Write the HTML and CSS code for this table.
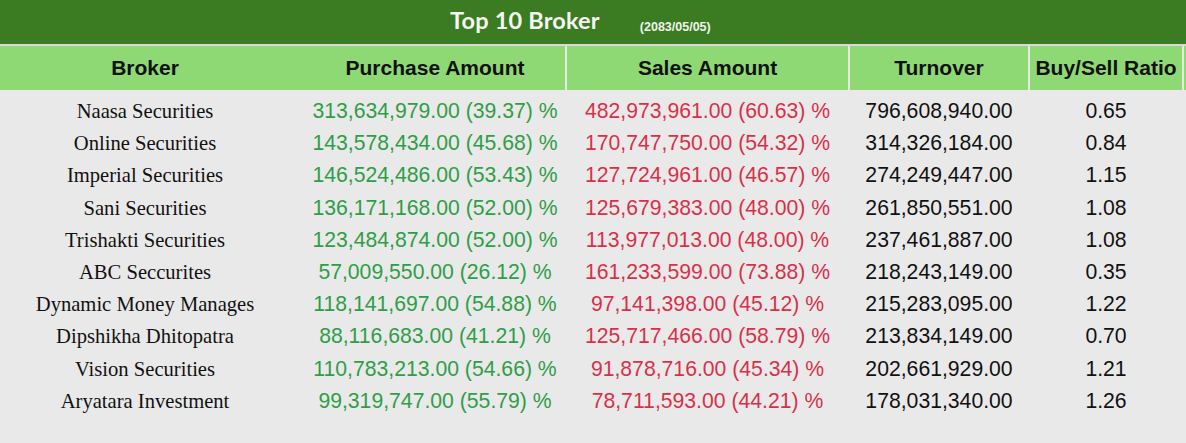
FILE: index.html
```html
<!DOCTYPE html>
<html>
<head>
<meta charset="utf-8">
<link rel="stylesheet" href="styles.css">
</head>
<body>
<div class="board">
  <div class="titlebar">
    <span class="title">Top 10 Broker</span>
    <span class="date">(2083/05/05)</span>
  </div>
  <div class="row head">
    <div class="c broker">Broker</div>
    <div class="c buy">Purchase Amount</div>
    <div class="c sell sep">Sales Amount</div>
    <div class="c turn sep">Turnover</div>
    <div class="c ratio sep last">Buy/Sell Ratio</div>
  </div>
  <div class="body">
    <div class="row"><div class="c broker">Naasa Securities</div><div class="c buy">313,634,979.00 (39.37) %</div><div class="c sell">482,973,961.00 (60.63) %</div><div class="c turn">796,608,940.00</div><div class="c ratio">0.65</div></div>
    <div class="row"><div class="c broker">Online Securities</div><div class="c buy">143,578,434.00 (45.68) %</div><div class="c sell">170,747,750.00 (54.32) %</div><div class="c turn">314,326,184.00</div><div class="c ratio">0.84</div></div>
    <div class="row"><div class="c broker">Imperial Securities</div><div class="c buy">146,524,486.00 (53.43) %</div><div class="c sell">127,724,961.00 (46.57) %</div><div class="c turn">274,249,447.00</div><div class="c ratio">1.15</div></div>
    <div class="row"><div class="c broker">Sani Securities</div><div class="c buy">136,171,168.00 (52.00) %</div><div class="c sell">125,679,383.00 (48.00) %</div><div class="c turn">261,850,551.00</div><div class="c ratio">1.08</div></div>
    <div class="row"><div class="c broker">Trishakti Securities</div><div class="c buy">123,484,874.00 (52.00) %</div><div class="c sell">113,977,013.00 (48.00) %</div><div class="c turn">237,461,887.00</div><div class="c ratio">1.08</div></div>
    <div class="row"><div class="c broker">ABC Seccurites</div><div class="c buy">57,009,550.00 (26.12) %</div><div class="c sell">161,233,599.00 (73.88) %</div><div class="c turn">218,243,149.00</div><div class="c ratio">0.35</div></div>
    <div class="row"><div class="c broker">Dynamic Money Manages</div><div class="c buy">118,141,697.00 (54.88) %</div><div class="c sell">97,141,398.00 (45.12) %</div><div class="c turn">215,283,095.00</div><div class="c ratio">1.22</div></div>
    <div class="row"><div class="c broker">Dipshikha Dhitopatra</div><div class="c buy">88,116,683.00 (41.21) %</div><div class="c sell">125,717,466.00 (58.79) %</div><div class="c turn">213,834,149.00</div><div class="c ratio">0.70</div></div>
    <div class="row"><div class="c broker">Vision Securities</div><div class="c buy">110,783,213.00 (54.66) %</div><div class="c sell">91,878,716.00 (45.34) %</div><div class="c turn">202,661,929.00</div><div class="c ratio">1.21</div></div>
    <div class="row"><div class="c broker">Aryatara Investment</div><div class="c buy">99,319,747.00 (55.79) %</div><div class="c sell">78,711,593.00 (44.21) %</div><div class="c turn">178,031,340.00</div><div class="c ratio">1.26</div></div>
  </div>
</div>
</body>
</html>
```

FILE: styles.css
```css
html, body {
  margin: 0;
  padding: 0;
  background: #e9e9e9;
}
.board {
  width: 1186px;
  height: 443px;
  background: #e9e9e9;
  font-family: "Liberation Sans", Arial, sans-serif;
}
.titlebar {
  background: #3b7b22;
  display: flex;
  align-items: baseline;
  padding-left: 450px;
  box-sizing: border-box;
  border-bottom: 2px solid #d6dbd3;
  height: 46px;
  padding-top: 6px;
}
.title {
  font-family: Lato, "Open Sans", sans-serif;
  font-weight: 700;
  font-size: 23.5px;
  color: #f5f7f2;
  letter-spacing: 0.2px;
}
.date {
  margin-left: 40px;
  font-size: 12.5px;
  font-weight: 700;
  color: #eef3ea;
  position: relative;
  top: 2px;
}
.row {
  display: grid;
  grid-template-columns: 290px 275px 283px 180px 156px;
}
.head {
  height: 44px;
  background: #8fd974;
}
.head .c {
  font-weight: 700;
  font-size: 21px;
  color: #111;
  line-height: 44px;
}
.head .sep {
  border-left: 2px solid #e2ebdd;
}
.head .last {
  border-right: 2px solid #e2ebdd;
}
.c {
  text-align: center;
  white-space: nowrap;
}
.buy {
  padding-left: 15px;
}
.body {
  padding-top: 5px;
}
.body .row {
  height: 32.2px;
  line-height: 32px;
  font-size: 21.2px;
}
.body .broker {
  font-family: "Liberation Serif", "Times New Roman", serif;
  font-size: 20.6px;
  color: #111;
}
.body .buy {
  color: #2e9e48;
}
.body .sell {
  color: #d9304a;
  padding-left: 2px;
}
.body .turn {
  color: #111;
  padding-left: 2px;
}
.body .ratio {
  color: #111;
  padding-left: 2px;
  padding-right: 2px;
}
```
